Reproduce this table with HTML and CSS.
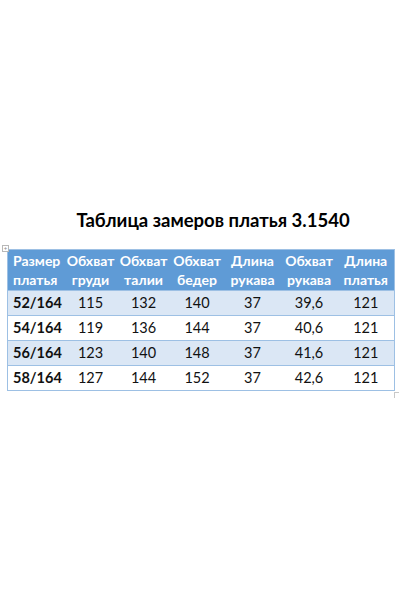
FILE: index.html
```html
<!DOCTYPE html>
<html>
<head>
<meta charset="utf-8">
<link rel="stylesheet" href="styles.css">
</head>
<body>
<div class="page">
  <h1 class="title">Таблица замеров платья 3.1540</h1>
  <div class="table-wrap">
    <span class="move-handle">+</span>
    <table class="sizes">
      <colgroup>
        <col class="c1"><col class="c2"><col class="c3"><col class="c4"><col class="c5"><col class="c6"><col class="c7">
      </colgroup>
      <thead>
        <tr>
          <th class="first">Размер платья</th>
          <th>Обхват груди</th>
          <th>Обхват талии</th>
          <th>Обхват бедер</th>
          <th>Длина рукава</th>
          <th>Обхват рукава</th>
          <th>Длина платья</th>
        </tr>
      </thead>
      <tbody>
        <tr class="odd"><td class="first">52/164</td><td>115</td><td>132</td><td>140</td><td>37</td><td>39,6</td><td>121</td></tr>
        <tr><td class="first">54/164</td><td>119</td><td>136</td><td>144</td><td>37</td><td>40,6</td><td>121</td></tr>
        <tr class="odd"><td class="first">56/164</td><td>123</td><td>140</td><td>148</td><td>37</td><td>41,6</td><td>121</td></tr>
        <tr><td class="first">58/164</td><td>127</td><td>144</td><td>152</td><td>37</td><td>42,6</td><td>121</td></tr>
      </tbody>
    </table>
    <span class="resize-handle"></span>
  </div>
</div>
</body>
</html>
```
FILE: styles.css
```css
html, body {
  margin: 0;
  padding: 0;
  background: #ffffff;
}
body {
  width: 400px;
  height: 600px;
  font-family: Lato, "Open Sans", "Liberation Sans", sans-serif;
  color: #000;
}
.page {
  padding-top: 206px;
}
.title {
  margin: 0 0 0 26px;
  text-align: center;
  font-size: 18.5px;
  font-weight: 700;
  line-height: 28px;
}
.table-wrap {
  position: relative;
  margin: 15px 6px 0 7px;
}
.move-handle {
  position: absolute;
  left: -5px;
  top: -4px;
  width: 5px;
  height: 5px;
  border: 1px solid #b8b8b8;
  font-size: 6px;
  line-height: 5px;
  text-align: center;
  color: #888;
  background: #fff;
}
.resize-handle {
  position: absolute;
  right: -5px;
  bottom: -7px;
  width: 4px;
  height: 5px;
  border-top: 1px solid #c8c8c8;
  border-left: 1px solid #c8c8c8;
}
.sizes {
  width: 387px;
  border-collapse: collapse;
  table-layout: fixed;
  border: 1px solid #9dc0e4;
}
.c1 { width: 56px; }
.c2 { width: 54px; }
.c3 { width: 52px; }
.c4 { width: 55px; }
.c5 { width: 56px; }
.c6 { width: 57px; }
.c7 { width: 57px; }
.sizes th {
  background: #5f9bd6;
  color: #ffffff;
  font-weight: 700;
  font-size: 14px;
  line-height: 19px;
  height: 40px;
  padding: 0 2px;
  text-align: center;
  vertical-align: middle;
}
.sizes th.first {
  text-align: left;
  padding-left: 5px;
}
.sizes td {
  height: 24px;
  padding: 0;
  font-size: 14.5px;
  line-height: 18px;
  text-align: center;
  border-top: 1px solid #9dc0e4;
  color: #111;
}
.sizes td.first {
  text-align: left;
  padding-left: 5px;
  font-weight: 700;
}
.sizes tr.odd td {
  background: #dbe7f5;
}
```
